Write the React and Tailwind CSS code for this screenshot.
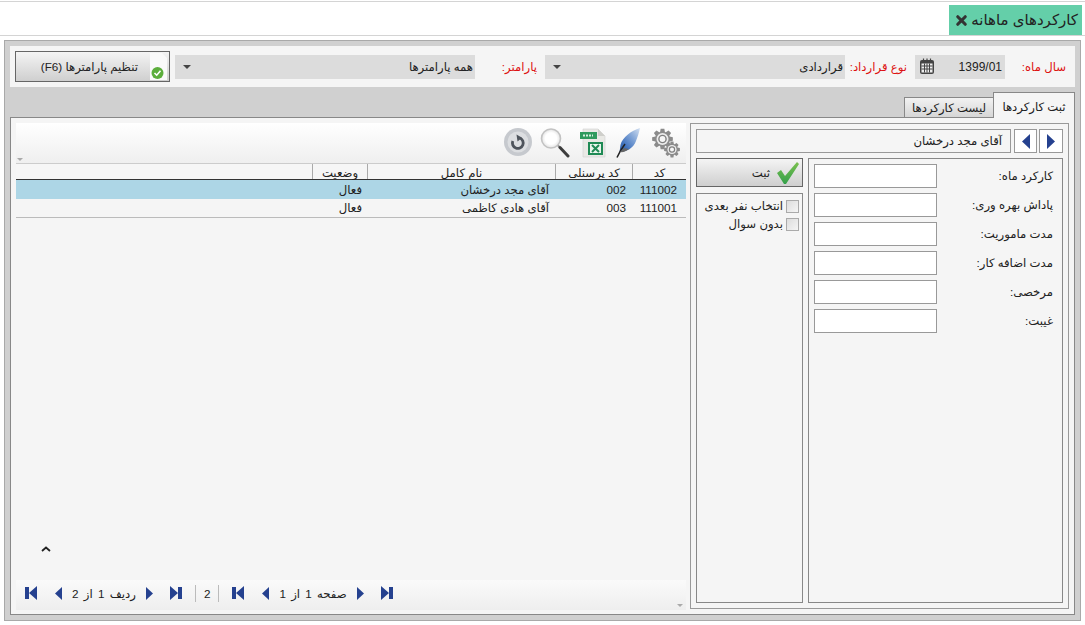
import React from "react";
import { X } from "lucide-react";

// toothed outline for the settings icon
const gearPath = (cx, cy, r1, r2, n) => {
  const pts = [];
  const step = (Math.PI * 2) / n;
  for (let i = 0; i < n; i++) {
    const a = i * step;
    [[-0.3, r2], [-0.16, r1], [0.16, r1], [0.3, r2]].forEach(([o, r]) => {
      pts.push(`${(cx + Math.cos(a + o * step * 1.4) * r).toFixed(2)} ${(cy + Math.sin(a + o * step * 1.4) * r).toFixed(2)}`);
    });
  }
  return `M${pts.join("L")}Z`;
};

const First = ({ flip }) => (
  <svg width="12" height="14" viewBox="0 0 12 14" className={flip ? "-scale-x-100" : ""}>
    <path d="M0 1h4v12H0zM12 0v14L4 7z" fill="#25418f" />
  </svg>
);

const Prev = ({ flip, w = 7, h = 13 }) => (
  <svg width={w} height={h} viewBox="0 0 7 13" preserveAspectRatio="none" className={flip ? "-scale-x-100" : ""}>
    <path d="M7 0v13L0 6.5z" fill="#25418f" />
  </svg>
);

const Pager = ({ children }) => (
  <div className="flex items-center">
    <First flip />
    <span className="w-[17px]" />
    <Prev flip />
    <span className="mx-[10px] whitespace-nowrap [word-spacing:2px]">{children}</span>
    <Prev />
    <span className="w-[18px]" />
    <First />
  </div>
);

const Gears = () => (
  <svg width="28" height="30" viewBox="0 0 28 30">
    <path d={gearPath(10.5, 11, 10.5, 7.5, 8)} fill="#8b8b8b" />
    <circle cx="10.5" cy="11" r="6" fill="#ececec" />
    <circle cx="10.5" cy="11" r="3.6" fill="#f6f6f6" stroke="#808080" strokeWidth="1.4" />
    <path d={gearPath(20, 21.5, 8, 5.8, 8)} fill="#8b8b8b" />
    <circle cx="20" cy="21.5" r="4.6" fill="#ececec" />
    <circle cx="20" cy="21.5" r="2.6" fill="#f6f6f6" stroke="#808080" strokeWidth="1.2" />
  </svg>
);

const Feather = () => (
  <svg width="26" height="30" viewBox="0 0 26 30">
    <defs>
      <linearGradient id="quill" x1="1" y1="0" x2="0" y2="1">
        <stop offset="0" stopColor="#d3e0f1" />
        <stop offset="0.4" stopColor="#7fa3d6" />
        <stop offset="0.75" stopColor="#3e71bd" />
        <stop offset="1" stopColor="#2f5796" />
      </linearGradient>
    </defs>
    <path d="M24 0C15 3 6.500 9 4.500 17l-1 7c7 0 14-4 16.500-11C21.500 9 23 5 24 0z" fill="url(#quill)" />
    <path d="M1 29.500C3.500 24 6 20 9 16" stroke="#222" strokeWidth="1.5" fill="none" />
    <path d="M4 24c3 .5 6-.5 9-3l-5-1z" fill="#666" />
  </svg>
);

const Excel = () => (
  <svg width="26" height="30" viewBox="0 0 26 30">
    <path d="M3 1h15l7 7v21H3z" fill="#e9e9e5" stroke="#d2d2d0" strokeWidth="0.6" />
    <path d="M18 1l7 7h-7z" fill="#cfcfcb" />
    <rect x="0" y="4" width="17" height="7" fill="#2f9a5d" />
    <path d="M3 7.500h10" stroke="#d8efe0" strokeWidth="2" strokeDasharray="2 1" />
    <rect x="8" y="14" width="15" height="13" fill="#1f8a55" />
    <rect x="10" y="16" width="11" height="9" fill="#e8f5ec" />
    <path d="M12 17l7 7M19 17l-7 7" stroke="#1f8a55" strokeWidth="2" />
  </svg>
);

const Search = () => (
  <svg width="30" height="30" viewBox="0 0 30 30" fill="none">
    <defs>
      <radialGradient id="lens" cx="0.5" cy="0.5" r="0.5">
        <stop offset="0.6" stopColor="#ffffff" />
        <stop offset="1" stopColor="#e2e2e2" />
      </radialGradient>
    </defs>
    <circle cx="11" cy="10.500" r="9.500" fill="url(#lens)" stroke="#c2c2c2" strokeWidth="1.6" />
    <path d="M18 17.500l1.500 1.500" stroke="#999" strokeWidth="2" />
    <path d="M20 19.500l8 8.500" stroke="#3d3d3d" strokeWidth="3" strokeLinecap="round" />
  </svg>
);

const Refresh = () => (
  <svg width="28" height="28" viewBox="0 0 28 28" fill="none">
    <circle cx="14" cy="14" r="14" fill="#c6c9ce" />
    <circle cx="14" cy="14" r="10.500" fill="#dcdee1" />
    <path d="M8.800 13a5.400 5.400 0 1 0 7-3" stroke="#4e545c" strokeWidth="2.800" />
    <path d="M12.500 6.500l5.500 3.200-4.500 3.800z" fill="#4e545c" />
  </svg>
);

const CheckMark = () => (
  <svg width="24" height="24" viewBox="0 0 24 24">
    <defs>
      <linearGradient id="tick" x1="0" y1="0" x2="0" y2="1">
        <stop offset="0" stopColor="#7cc04f" />
        <stop offset="1" stopColor="#33a04a" />
      </linearGradient>
    </defs>
    <path d="M1 12l4-3 4 6L21 1l2 2L10 23h-2z" fill="url(#tick)" />
  </svg>
);

const fields = ["کارکرد ماه:", "پاداش بهره وری:", "مدت ماموریت:", "مدت اضافه کار:", "مرخصی:", "غیبت:"];
const rows = [
  { code: "111002", pcode: "002", name: "آقای مجد درخشان", state: "فعال", sel: true },
  { code: "111001", pcode: "003", name: "آقای هادی کاظمی", state: "فعال" },
];

const Select = ({ children }) => (
  <div className="flex h-[24px] w-[300px] items-center justify-between bg-[#dcdcdc]">
    <span className="pr-[2px]">{children}</span>
    <span className="ml-[8px] h-0 w-0 border-x-[4px] border-t-[4px] border-x-transparent border-t-[#444]" />
  </div>
);

export default function App() {
  return (
    <div dir="rtl" className="h-[625px] w-[1085px] overflow-hidden bg-white text-[11.7px] text-[#222] font-['Liberation_Sans','DejaVu_Sans',sans-serif]">
      <div className="mt-[1px] flex h-[35px] items-end border-y border-[#d4d4d4] pr-[3px]">
        <div className="flex h-[30px] w-[133px] items-center gap-[2px] bg-[#64cfa9] pr-[4px] text-[15px] whitespace-nowrap">
          <span>کارکردهای ماهانه</span>
          <X size={15} strokeWidth={5} color="#333" />
        </div>
      </div>

      <div className="mx-[4px] mt-[4px] h-[581px] border border-[#a9a9a9] bg-[#d0d0d0] p-[5px]">
        <div className="flex h-[41px] items-center whitespace-nowrap bg-[#f5f5f5] pr-[9px]">
          <span className="w-[61px] text-[#d11]">سال ماه:</span>
          <div className="flex h-[24px] w-[90px] items-center justify-between bg-[#dcdcdc] pl-[4px] pr-[3px] text-[12px]">
            <span>1399/01</span>
            <svg width="16" height="17" viewBox="0 0 16 17">
              <rect x="1" y="2" width="14" height="14" rx="2" fill="#444" />
              <rect x="2.500" y="5.500" width="11" height="9" fill="#eee" />
              <path d="M2.500 8h11M2.500 11h11M5.500 5.500v9M8 5.500v9M10.500 5.500v9" stroke="#444" strokeWidth="1" />
              <path d="M4.500 .5v3M8 .5v3M11.500 .5v3" stroke="#444" strokeWidth="1.200" />
            </svg>
          </div>
          <span className="w-[70px] pr-[8px] text-[#d11]">نوع قرارداد:</span>
          <Select>قراردادی</Select>
          <span className="w-[70px] pr-[8px] text-[#d11]">پارامتر:</span>
          <Select>همه پارامترها</Select>
          <button className="mr-[5px] flex h-[31px] w-[155px] items-center border border-[#666] bg-gradient-to-b from-[#f4f4f4] to-[#cfcfcf] pr-[0px]">
            <svg width="24" height="29" viewBox="0 0 24 29">
              <path d="M5 1h12l5 5v22H5z" fill="#fafafa" />
              <circle cx="12.500" cy="21" r="6" fill="#5cae3c" />
              <path d="M9.500 21l2.200 2.200 3.800-4.400" stroke="#fff" strokeWidth="1.600" fill="none" />
            </svg>
            <span className="mr-[7px]">تنظیم پارامترها (F6)</span>
          </button>
        </div>

        <div className="mt-[5px] flex h-[25px] items-end">
          <div className="relative -mb-[1px] flex h-[26px] w-[82px] items-center justify-center border border-b-0 border-[#888] bg-[#f5f5f5] pt-[2px]">ثبت کارکردها</div>
          <div className="flex h-[20px] w-[89px] items-center justify-center border border-r-0 border-b-0 border-[#888] bg-gradient-to-b from-[#f2f2f2] to-[#d6d6d6] pt-[1px]">لیست کارکردها</div>
        </div>

        <div className="flex h-[498px] gap-[4px] border border-[#888] bg-[#f5f5f5] pr-[5px] pt-[5px]">
          <div className="flex h-[486px] w-[379px] shrink-0 flex-col border border-[#999] px-[5px] pt-[5px]">
            <div className="flex h-[24px]">
              <div className="flex w-[24px] items-center justify-center border border-[#999] bg-white"><Prev flip w={8} h={15} /></div>
              <div className="mr-[2px] flex w-[23px] items-center justify-center border border-[#999] bg-white"><Prev w={8} h={15} /></div>
              <div className="mr-[3px] flex flex-1 items-center border border-[#999] pr-[8px]">آقای مجد درخشان</div>
            </div>
            <div className="mt-[5px] flex h-[445px] gap-[5px]">
              <div className="flex w-[255px] flex-col gap-[5px] border border-[#888] pt-[5px] pl-[5px] pr-[9px]">
                {fields.map((f) => (
                  <div key={f} className="flex h-[24px] items-center justify-between">
                    <span>{f}</span>
                    <input className="h-[24px] w-[123px] border border-[#999] bg-white" />
                  </div>
                ))}
              </div>
              <div className="flex w-[107px] flex-col gap-[6px]">
                <button className="flex h-[29px] items-center gap-[6px] border border-[#666] bg-gradient-to-b from-[#f4f4f4] to-[#cfcfcf] pr-[2px]">
                  <CheckMark />
                  <span>ثبت</span>
                </button>
                <div className="flex flex-1 flex-col gap-[4px] border border-[#888] pr-[3px] pt-[5px]">
                  {["انتخاب نفر بعدی", "بدون سوال"].map((t) => (
                    <label key={t} className="flex h-[14px] items-center gap-[3px] whitespace-nowrap">
                      <span className="h-[13px] w-[13px] shrink-0 border border-[#aaa] bg-gradient-to-br from-[#ddd] to-[#f5f5f5]" />
                      {t}
                    </label>
                  ))}
                </div>
              </div>
            </div>
          </div>

          <div className="flex h-[487px] w-[670px] shrink-0 flex-col">
            <div className="relative flex h-[40px] items-start gap-[10px] bg-gradient-to-b from-white to-[#efefef] pr-[6px] pt-[5px]">
              <Gears />
              <Feather />
              <Excel />
              <Search />
              <div className="-mr-[2px]"><Refresh /></div>
              <span className="absolute bottom-[2px] left-[1px] h-0 w-0 border-x-[3px] border-t-[3px] border-x-transparent border-t-[#aaa]" />
            </div>
            <div className="flex h-[17px] items-center border-y border-t-[#ccc] border-b-[#333] bg-[#f6f6f6]">
              <div className="h-full w-[54px] border-l border-[#aaa] text-center">کد</div>
              <div className="h-full w-[77px] border-l border-[#aaa] text-center">کد پرسنلی</div>
              <div className="h-full w-[188px] border-l border-[#aaa] text-center">نام کامل</div>
              <div className="h-full w-[55px] border-l border-[#aaa] text-center">وضعیت</div>
            </div>
            {rows.map((r) => (
              <div key={r.code} className={`flex h-[19px] items-center ${r.sel ? "bg-[#add6e6]" : "border-b border-[#bbb]"}`}>
                <div className="w-[54px] pr-[9px]">{r.code}</div>
                <div className="w-[77px] pr-[6px]">{r.pcode}</div>
                <div className="w-[188px] pr-[6px]">{r.name}</div>
                <div className="w-[55px] pr-[5px]">{r.state}</div>
              </div>
            ))}
            <div className="flex flex-1 items-end justify-end pb-[28px] pl-[25px]">
              <svg width="10" height="6" viewBox="0 0 10 6" fill="none"><path d="M1 5l4-3.500L9 5" stroke="#222" strokeWidth="1.800" /></svg>
            </div>
            <div className="relative flex h-[30px] items-center justify-end bg-gradient-to-b from-[#fafafa] to-[#eee] pb-[3px] pl-[9px]">
              <Pager>صفحه 1 از 1</Pager>
              <span className="mx-[13px] border-x border-[#bbb] px-[8px]">2</span>
              <Pager>ردیف 1 از 2</Pager>
              <span className="absolute bottom-[3px] right-[3px] h-0 w-0 border-x-[3px] border-t-[3px] border-x-transparent border-t-[#aaa]" />
            </div>
          </div>
        </div>
      </div>
    </div>
  );
}
